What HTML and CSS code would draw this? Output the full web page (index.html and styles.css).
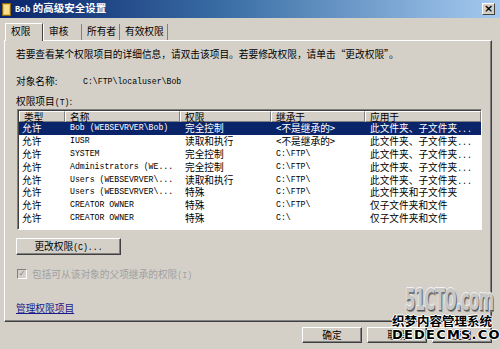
FILE: index.html
```html
<!DOCTYPE html>
<html lang="zh-CN">
<head>
    <meta charset="UTF-8">
    <title>Bob 的高级安全设置</title>
    <link rel="stylesheet" href="styles.css">
</head>
<body>
    <div class="window">
        <!-- 标题栏 -->
        <div class="titlebar">
            <svg class="title-icon" width="9" height="13" viewBox="0 0 9 13">
                <rect x="0.5" y="0.5" width="8" height="12" fill="#e8c050" stroke="#8a6a10"/>
                <rect x="2" y="2" width="5" height="9" fill="#f8e090"/>
            </svg>
            <span class="title-text"><span class="latin">Bob</span> 的高级安全设置</span>
            <span class="close-btn">×</span>
        </div>

        <!-- 标签页 -->
        <div class="tabs">
            <div class="tab active">权限</div>
            <div class="tab">审核</div>
            <div class="tab">所有者</div>
            <div class="tab">有效权限</div>
        </div>

        <div class="panel">
            <p class="desc">若要查看某个权限项目的详细信息，请双击该项目。若要修改权限，请单击“更改权限”。</p>
            <div class="object-row">
                <span class="object-label">对象名称:</span>
                <span class="latin">C:\FTP\localuser\Bob</span>
            </div>
            <div class="list-label">权限项目<span class="latin">(T)</span>:</div>

            <div class="list">
                <div class="list-head">
                    <div class="col col-type">类型</div>
                    <div class="col col-name">名称</div>
                    <div class="col col-perm">权限</div>
                    <div class="col col-from">继承于</div>
                    <div class="col col-apply">应用于</div>
                </div>
                <div class="list-row selected">
                    <div class="col col-type">允许</div>
                    <div class="col col-name latin">Bob (WEBSEVRVER\Bob)</div>
                    <div class="col col-perm">完全控制</div>
                    <div class="col col-from">&lt;不是继承的&gt;</div>
                    <div class="col col-apply">此文件夹、子文件夹<span class="latin">...</span></div>
                </div>
                <div class="list-row">
                    <div class="col col-type">允许</div>
                    <div class="col col-name latin">IUSR</div>
                    <div class="col col-perm">读取和执行</div>
                    <div class="col col-from">&lt;不是继承的&gt;</div>
                    <div class="col col-apply">此文件夹、子文件夹<span class="latin">...</span></div>
                </div>
                <div class="list-row">
                    <div class="col col-type">允许</div>
                    <div class="col col-name latin">SYSTEM</div>
                    <div class="col col-perm">完全控制</div>
                    <div class="col col-from latin">C:\FTP\</div>
                    <div class="col col-apply">此文件夹、子文件夹<span class="latin">...</span></div>
                </div>
                <div class="list-row">
                    <div class="col col-type">允许</div>
                    <div class="col col-name latin">Administrators (WE...</div>
                    <div class="col col-perm">完全控制</div>
                    <div class="col col-from latin">C:\FTP\</div>
                    <div class="col col-apply">此文件夹、子文件夹<span class="latin">...</span></div>
                </div>
                <div class="list-row">
                    <div class="col col-type">允许</div>
                    <div class="col col-name latin">Users (WEBSEVRVER\...</div>
                    <div class="col col-perm">读取和执行</div>
                    <div class="col col-from latin">C:\FTP\</div>
                    <div class="col col-apply">此文件夹、子文件夹<span class="latin">...</span></div>
                </div>
                <div class="list-row">
                    <div class="col col-type">允许</div>
                    <div class="col col-name latin">Users (WEBSEVRVER\...</div>
                    <div class="col col-perm">特殊</div>
                    <div class="col col-from latin">C:\FTP\</div>
                    <div class="col col-apply">此文件夹和子文件夹</div>
                </div>
                <div class="list-row">
                    <div class="col col-type">允许</div>
                    <div class="col col-name latin">CREATOR OWNER</div>
                    <div class="col col-perm">特殊</div>
                    <div class="col col-from latin">C:\FTP\</div>
                    <div class="col col-apply">仅子文件夹和文件</div>
                </div>
                <div class="list-row">
                    <div class="col col-type">允许</div>
                    <div class="col col-name latin">CREATOR OWNER</div>
                    <div class="col col-perm">特殊</div>
                    <div class="col col-from latin">C:\</div>
                    <div class="col col-apply">仅子文件夹和文件</div>
                </div>
            </div>

            <button class="win-button change-button">更改权限<span class="latin">(C)...</span></button>

            <label class="inherit-row">
                <span class="checkbox">✓</span>
                <span>包括可从该对象的父项继承的权限<span class="latin">(I)</span></span>
            </label>

            <a class="manage-link" href="#">管理权限项目</a>
        </div>

        <div class="footer">
            <button class="win-button footer-button">确定</button>
            <button class="win-button footer-button">取消</button>
            <button class="win-button footer-button">应用</button>
        </div>

        <!-- 水印 -->
        <div class="watermark">
            <div class="wm-cto">51CTO.com</div>
            <div class="wm-dede">织梦内容管理系统</div>
            <div class="wm-dede-en">DEDECMS.COM</div>
        </div>
    </div>
</body>
</html>
```

FILE: styles.css
```css
:root {
    --face-color: #d4d0c8;
    --shadow-color: #808080;
    --dark-color: #404040;
    --select-color: #0a246a;
}

* {
    box-sizing: border-box;
    margin: 0;
    padding: 0;
}

body {
    width: 500px;
    height: 349px;
    overflow: hidden;
    background: var(--face-color);
    font-family: "Noto Sans CJK SC", sans-serif;
    font-size: 9.7px;
    color: #000;
}

.latin {
    font-family: "Liberation Mono", monospace;
    font-size: 8.2px;
}

.window {
    position: relative;
    width: 500px;
    height: 349px;
}

.titlebar {
    height: 18px;
    display: flex;
    align-items: center;
    padding: 0 5px 0 2px;
    background: linear-gradient(to right, #0a246a 0%, #3a6ea5 45%, #a6caf0 100%);
    color: #fff;
}

.title-icon {
    flex: none;
    margin-right: 4px;
}

.title-text {
    flex: 1;
    font-weight: bold;
    font-size: 10.5px;
    line-height: 18px;
}

.title-text .latin {
    font-size: 8.5px;
    font-weight: bold;
}

.close-btn {
    width: 13px;
    height: 12px;
    background: var(--face-color);
    color: #000;
    border: 1px solid;
    border-color: #fff var(--dark-color) var(--dark-color) #fff;
    font-family: "DejaVu Sans", sans-serif;
    font-size: 11px;
    font-weight: bold;
    line-height: 9px;
    text-align: center;
}

.tabs {
    display: flex;
    align-items: flex-end;
    height: 22px;
    padding: 4px 0 0 5px;
}

.tab {
    flex: none;
    height: 16px;
    padding-left: 5px;
    line-height: 15px;
    white-space: nowrap;
    border-right: 1px solid var(--shadow-color);
}

.tab.active {
    height: 18px;
    width: 38px;
    border: 1px solid #fff;
    border-bottom: none;
    border-right: 1px solid var(--dark-color);
    background: var(--face-color);
    margin-bottom: -1px;
    position: relative;
    z-index: 1;
}

.tab:nth-child(2) {
    width: 39px;
    border-left: 1px solid #fff;
}

.tab:nth-child(3) {
    width: 38px;
}

.tab:nth-child(4) {
    width: 48px;
}

.panel {
    width: 488px;
    height: 282px;
    margin-left: 4px;
    padding: 0 10px 0 11px;
    border: 1px solid;
    border-color: #fff var(--dark-color) var(--dark-color) #fff;
    box-shadow: inset -1px -1px 0 var(--shadow-color);
}

.desc {
    margin-top: 6px;
    line-height: 14px;
}

.object-row {
    display: flex;
    align-items: center;
    margin-top: 13px;
    height: 14px;
}

.object-label {
    width: 67px;
}

.list-label {
    margin-top: 6px;
    height: 14px;
    line-height: 14px;
}

.list {
    width: 465px;
    height: 121px;
    margin: 1px 0 0 1px;
    background: #fff;
    border: 1px solid;
    border-color: var(--shadow-color) #fff #fff var(--shadow-color);
    box-shadow: inset 1px 1px 0 var(--dark-color);
    padding: 1px 0 0 1px;
    overflow: hidden;
}

.list-head,
.list-row {
    display: flex;
}

.col {
    flex: none;
    overflow: hidden;
    white-space: nowrap;
    padding-left: 5px;
}

.col-type { width: 46px; padding-left: 3px; }
.col-name { width: 115px; }
.col-perm { width: 91px; }
.col-from { width: 94px; }
.col-apply { flex: 1; }

.list-head .col {
    height: 11px;
    line-height: 10px;
    padding-left: 4px;
    overflow: visible;
    background: var(--face-color);
    border: 1px solid;
    border-color: #fff var(--shadow-color) var(--shadow-color) #fff;
}

.list-row {
    height: 12.9px;
}

.list-row .col {
    height: 12.9px;
    line-height: 12px;
}

.list-row .latin {
    line-height: 12px;
}

.list-row.selected {
    background: var(--select-color);
    color: #fff;
}

.win-button {
    display: block;
    background: var(--face-color);
    border: 1px solid;
    border-color: #fff var(--dark-color) var(--dark-color) #fff;
    box-shadow: inset -1px -1px 0 var(--shadow-color);
    font-family: "Noto Sans CJK SC", sans-serif;
    font-size: 9.7px;
    color: #000;
    line-height: 14px;
    text-align: center;
}

.change-button {
    width: 105px;
    height: 17px;
    margin: 8px 0 0 0;
}

.inherit-row {
    display: flex;
    align-items: center;
    gap: 5px;
    margin-top: 13px;
    height: 12px;
    color: #a0a0a0;
}

.checkbox {
    width: 10px;
    height: 10px;
    margin-left: 1px;
    background: var(--face-color);
    border: 1px solid;
    border-color: var(--shadow-color) #fff #fff var(--shadow-color);
    font-family: "DejaVu Sans", sans-serif;
    font-size: 8px;
    line-height: 8px;
    color: #808080;
    text-align: center;
}

.manage-link {
    display: inline-block;
    margin-top: 21px;
    color: #1a1a8c;
    text-decoration: underline;
    line-height: 14px;
}

.footer {
    display: flex;
    justify-content: flex-end;
    gap: 5px;
    padding: 5px 8px 0 0;
}

.footer-button {
    width: 60px;
    height: 16px;
}

.watermark {
    position: absolute;
    left: 390px;
    top: 286px;
    width: 110px;
    pointer-events: none;
}

.wm-cto {
    margin-left: 15px;
    font-family: "DejaVu Sans", sans-serif;
    font-weight: bold;
    font-size: 30px;
    line-height: 27px;
    letter-spacing: -1.5px;
    color: #c8c8c8;
    text-shadow: 1px 1px 0 #555, -1px 0 0 #f2f2f2, 0 -1px 0 #f2f2f2, 2px 2px 0 #8a8a8a;
    transform: scaleX(0.5);
    transform-origin: left;
    white-space: nowrap;
}

.wm-dede,
.wm-dede-en {
    margin-left: 2px;
    font-weight: bold;
    font-size: 12.5px;
    line-height: 14px;
    color: #000;
    white-space: nowrap;
    text-shadow: 1px 0 0 #fff, -1px 0 0 #fff, 0 1px 0 #fff, 0 -1px 0 #fff;
}

.wm-dede {
    margin-top: 1px;
}

.wm-dede-en {
    font-family: "DejaVu Sans", sans-serif;
    font-size: 13px;
    letter-spacing: 1.2px;
}
```
